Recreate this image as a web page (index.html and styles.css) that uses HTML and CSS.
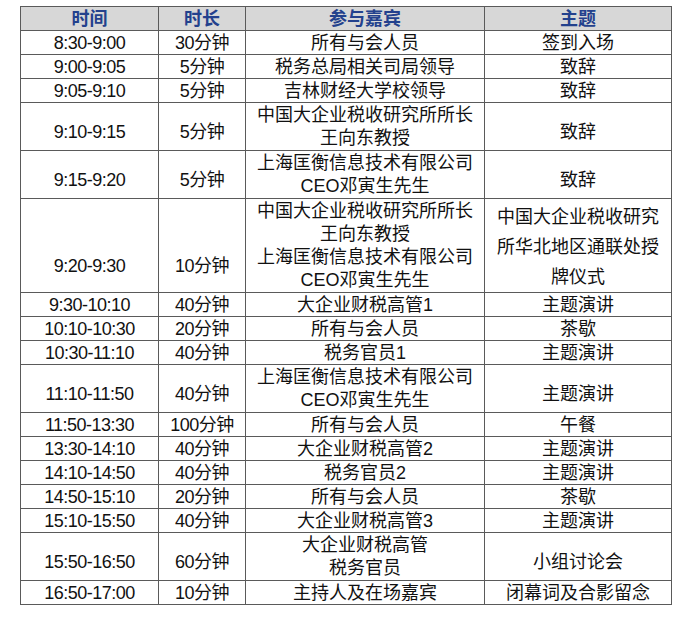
FILE: index.html
```html
<!DOCTYPE html>
<html lang="zh-CN">
<head>
<meta charset="utf-8">
<title>议程</title>
<link rel="stylesheet" href="styles.css">
</head>
<body>
<div class="page">
<table class="agenda">
  <colgroup>
    <col class="c-time"><col class="c-dur"><col class="c-guest"><col class="c-theme">
  </colgroup>
  <thead>
    <tr class="h1"><th>时间</th><th>时长</th><th>参与嘉宾</th><th>主题</th></tr>
  </thead>
  <tbody>
    <tr class="h1"><td class="num">8:30-9:00</td><td class="num">30分钟</td><td>所有与会人员</td><td>签到入场</td></tr>
    <tr class="h1"><td class="num">9:00-9:05</td><td class="num">5分钟</td><td>税务总局相关司局领导</td><td>致辞</td></tr>
    <tr class="h1"><td class="num">9:05-9:10</td><td class="num">5分钟</td><td>吉林财经大学校领导</td><td>致辞</td></tr>
    <tr class="h2"><td class="num low">9:10-9:15</td><td class="num low">5分钟</td><td class="multi">中国大企业税收研究所所长<br>王向东教授</td><td class="low">致辞</td></tr>
    <tr class="h2"><td class="num low">9:15-9:20</td><td class="num low">5分钟</td><td class="multi">上海匡衡信息技术有限公司<br>CEO邓寅生先生</td><td class="low">致辞</td></tr>
    <tr class="h4"><td class="num low4">9:20-9:30</td><td class="num low4">10分钟</td><td class="multi4">中国大企业税收研究所所长<br>王向东教授<br>上海匡衡信息技术有限公司<br>CEO邓寅生先生</td><td class="theme3">中国大企业税收研究<br>所华北地区通联处授<br>牌仪式</td></tr>
    <tr class="h1"><td class="num">9:30-10:10</td><td class="num">40分钟</td><td>大企业财税高管1</td><td>主题演讲</td></tr>
    <tr class="h1"><td class="num">10:10-10:30</td><td class="num">20分钟</td><td>所有与会人员</td><td>茶歇</td></tr>
    <tr class="h1"><td class="num">10:30-11:10</td><td class="num">40分钟</td><td>税务官员1</td><td>主题演讲</td></tr>
    <tr class="h2"><td class="num low">11:10-11:50</td><td class="num low">40分钟</td><td class="multi">上海匡衡信息技术有限公司<br>CEO邓寅生先生</td><td class="low">主题演讲</td></tr>
    <tr class="h1"><td class="num">11:50-13:30</td><td class="num">100分钟</td><td>所有与会人员</td><td>午餐</td></tr>
    <tr class="h1"><td class="num">13:30-14:10</td><td class="num">40分钟</td><td>大企业财税高管2</td><td>主题演讲</td></tr>
    <tr class="h1"><td class="num">14:10-14:50</td><td class="num">40分钟</td><td>税务官员2</td><td>主题演讲</td></tr>
    <tr class="h1"><td class="num">14:50-15:10</td><td class="num">20分钟</td><td>所有与会人员</td><td>茶歇</td></tr>
    <tr class="h1"><td class="num">15:10-15:50</td><td class="num">40分钟</td><td>大企业财税高管3</td><td>主题演讲</td></tr>
    <tr class="h2"><td class="num low">15:50-16:50</td><td class="num low">60分钟</td><td class="multi">大企业财税高管<br>税务官员</td><td class="low">小组讨论会</td></tr>
    <tr class="h1"><td class="num">16:50-17:00</td><td class="num">10分钟</td><td>主持人及在场嘉宾</td><td>闭幕词及合影留念</td></tr>
  </tbody>
</table>
</div>
</body>
</html>
```
FILE: styles.css
```css
html, body {
  margin: 0;
  padding: 0;
  background: #ffffff;
}

.page {
  padding: 6px 0 0 20px;
}

.agenda {
  border-collapse: collapse;
  table-layout: fixed;
  width: 651px;
  font-family: "Liberation Sans", "Noto Sans CJK SC", sans-serif;
  font-size: 18px;
  color: #111111;
}

.c-time { width: 138px; }
.c-dur { width: 87px; }
.c-guest { width: 239px; }
.c-theme { width: 187px; }

.agenda th,
.agenda td {
  border: 1px solid #5a5a5a;
  padding: 0;
  text-align: center;
  vertical-align: middle;
  line-height: 22px;
  white-space: nowrap;
  overflow: hidden;
}

.agenda th {
  background: #d7d7d7;
  color: #23418d;
  font-weight: bold;
}

.h1 { height: 24px; }
.h2 { height: 48px; }
.h4 { height: 94px; }

.num { letter-spacing: -0.5px; }

.agenda td.low {
  vertical-align: top;
  padding-top: 18px;
}

.agenda td.low4 {
  vertical-align: top;
  padding-top: 56px;
}

.agenda td.multi {
  line-height: 23px;
}

.agenda td.multi4 {
  line-height: 23px;
}

.agenda td.theme3 {
  vertical-align: top;
  line-height: 30px;
  padding-top: 3px;
}
```
